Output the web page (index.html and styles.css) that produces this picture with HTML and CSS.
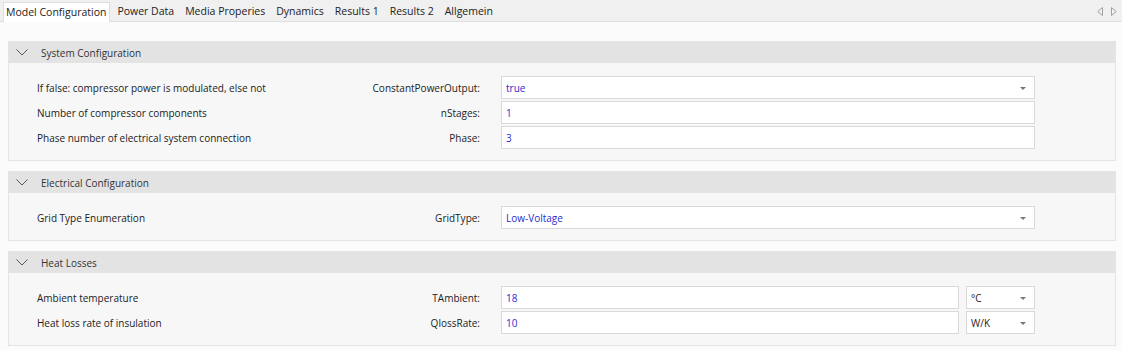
FILE: index.html
```html
<!DOCTYPE html>
<html>
<head>
<meta charset="utf-8">
<link rel="stylesheet" href="styles.css">
</head>
<body>
<div class="tabbar">
  <div class="tab active">Model Configuration</div>
  <div class="tab">Power Data</div>
  <div class="tab">Media Properies</div>
  <div class="tab">Dynamics</div>
  <div class="tab">Results 1</div>
  <div class="tab">Results 2</div>
  <div class="tab">Allgemein</div>
  <div class="scroll">
    <svg width="6" height="9" viewBox="0 0 6 9"><path d="M5.5 0.5 L0.8 4.5 L5.5 8.5 Z" fill="none" stroke="#a0a0a0" stroke-width="1"/></svg>
    <svg width="6" height="9" viewBox="0 0 6 9"><path d="M0.5 0.5 L5.2 4.5 L0.5 8.5 Z" fill="none" stroke="#a0a0a0" stroke-width="1"/></svg>
  </div>
</div>
<div class="content">
  <section class="group">
    <div class="ghead"><svg class="chev" width="12" height="7" viewBox="0 0 12 7"><path d="M0.5 0.5 L6 6 L11.5 0.5" fill="none" stroke="#555" stroke-width="1"/></svg><span>System Configuration</span></div>
    <div class="gbody">
      <div class="row"><div class="desc">If false: compressor power is modulated, else not</div><div class="lbl">ConstantPowerOutput:</div><div class="field combo"><span class="val">true</span><span class="arr"></span></div></div>
      <div class="row"><div class="desc">Number of compressor components</div><div class="lbl">nStages:</div><div class="field"><span class="val">1</span></div></div>
      <div class="row"><div class="desc">Phase number of electrical system connection</div><div class="lbl">Phase:</div><div class="field"><span class="val">3</span></div></div>
    </div>
  </section>
  <section class="group">
    <div class="ghead"><svg class="chev" width="12" height="7" viewBox="0 0 12 7"><path d="M0.5 0.5 L6 6 L11.5 0.5" fill="none" stroke="#555" stroke-width="1"/></svg><span>Electrical Configuration</span></div>
    <div class="gbody">
      <div class="row"><div class="desc">Grid Type Enumeration</div><div class="lbl">GridType:</div><div class="field combo"><span class="val">Low-Voltage</span><span class="arr"></span></div></div>
    </div>
  </section>
  <section class="group">
    <div class="ghead"><svg class="chev" width="12" height="7" viewBox="0 0 12 7"><path d="M0.5 0.5 L6 6 L11.5 0.5" fill="none" stroke="#555" stroke-width="1"/></svg><span>Heat Losses</span></div>
    <div class="gbody">
      <div class="row"><div class="desc">Ambient temperature</div><div class="lbl">TAmbient:</div><div class="fieldpair"><div class="field num"><span class="val">18</span></div><div class="field unit combo"><span class="uval">°C</span><span class="arr"></span></div></div></div>
      <div class="row"><div class="desc">Heat loss rate of insulation</div><div class="lbl">QlossRate:</div><div class="fieldpair"><div class="field num"><span class="val">10</span></div><div class="field unit combo"><span class="uval">W/K</span><span class="arr"></span></div></div></div>
    </div>
  </section>
</div>
</body>
</html>
```
FILE: styles.css
```css
html, body {
  margin: 0;
  padding: 0;
  background: #fbfbfb;
  font-family: "Open Sans", "Noto Sans", sans-serif;
  font-size: 10px;
  color: #222;
}
.tabbar {
  height: 22px;
  box-sizing: border-box;
  background: #f0f0f0;
  border-bottom: 1px solid #dedede;
  display: flex;
  align-items: flex-end;
  padding-left: 3px;
  font-size: 10.5px;
}
.tab {
  height: 19px;
  line-height: 18px;
  padding: 0 4px 0 4px;
  margin-right: 3px;
  box-sizing: border-box;
  color: #222;
  white-space: nowrap;
}
.tab.active {
  background: #ffffff;
  border: 1px solid #dedede;
  border-bottom: none;
  height: 20px;
  margin-bottom: -1px;
  padding: 0 3px 0 2px;
}
.scroll {
  margin-left: auto;
  align-self: center;
  display: flex;
  gap: 8px;
  padding-right: 5px;
  padding-top: 1px;
}
.content {
  padding: 19px 6px 4px 8px;
  display: flex;
  flex-direction: column;
  gap: 10px;
}
.group {
  border: 1px solid #e4e4e4;
  background: #f7f7f7;
}
.ghead {
  height: 21px;
  background: #e3e3e3;
  display: flex;
  align-items: center;
  padding-left: 7px;
  color: #333;
}
.chev {
  margin-right: 13px;
}
.gbody {
  padding: 13px 0 11px 28px;
  display: flex;
  flex-direction: column;
  gap: 2px;
}
.row {
  display: grid;
  grid-template-columns: 250px 214px 534px;
  align-items: center;
  height: 23px;
}
.desc {
  white-space: nowrap;
}
.lbl {
  text-align: right;
  padding-right: 21px;
}
.field {
  height: 23px;
  box-sizing: border-box;
  background: #fff;
  border: 1px solid #d9d9d9;
  display: flex;
  align-items: center;
  padding-left: 4px;
  position: relative;
}
.val {
  color: #2b2bcf;
}
.uval {
  color: #222;
}
.arr {
  position: absolute;
  right: 8px;
  top: 10px;
  width: 0;
  height: 0;
  border-left: 3px solid transparent;
  border-right: 3px solid transparent;
  border-top: 3px solid #777;
}
.fieldpair {
  display: flex;
  gap: 7px;
}
.num {
  flex: 1;
}
.unit {
  width: 69px;
}
```
